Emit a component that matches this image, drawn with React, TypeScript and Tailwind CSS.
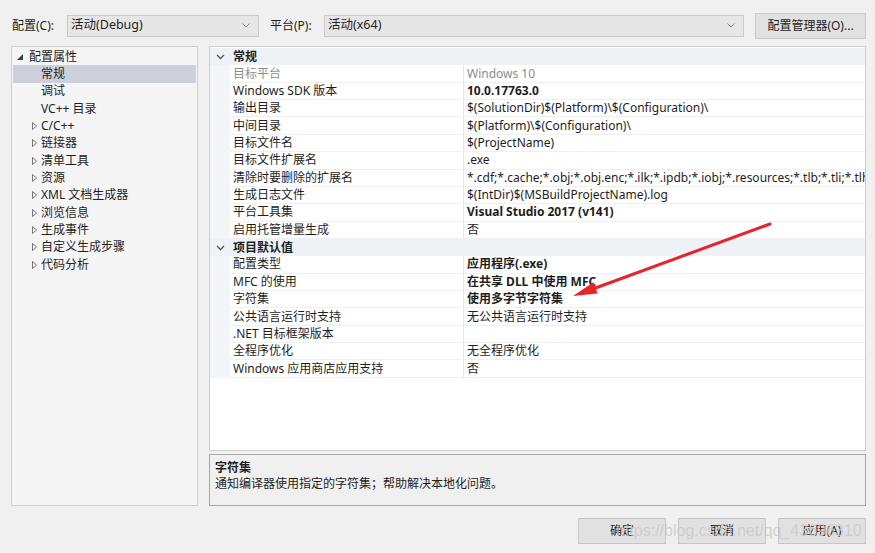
import React from 'react';

type Row =
  | { kind: 'cat'; label: string }
  | { kind: 'prop'; name: string; value: string; bold?: boolean; dim?: boolean };

const rows: Row[] = [
  { kind: 'cat', label: '常规' },
  { kind: 'prop', name: '目标平台', value: 'Windows 10', dim: true },
  { kind: 'prop', name: 'Windows SDK 版本', value: '10.0.17763.0', bold: true },
  { kind: 'prop', name: '输出目录', value: '$(SolutionDir)$(Platform)\\$(Configuration)\\' },
  { kind: 'prop', name: '中间目录', value: '$(Platform)\\$(Configuration)\\' },
  { kind: 'prop', name: '目标文件名', value: '$(ProjectName)' },
  { kind: 'prop', name: '目标文件扩展名', value: '.exe' },
  {
    kind: 'prop',
    name: '清除时要删除的扩展名',
    value: '*.cdf;*.cache;*.obj;*.obj.enc;*.ilk;*.ipdb;*.iobj;*.resources;*.tlb;*.tli;*.tlh;*.tmp;*.rsp',
  },
  { kind: 'prop', name: '生成日志文件', value: '$(IntDir)$(MSBuildProjectName).log' },
  { kind: 'prop', name: '平台工具集', value: 'Visual Studio 2017 (v141)', bold: true },
  { kind: 'prop', name: '启用托管增量生成', value: '否' },
  { kind: 'cat', label: '项目默认值' },
  { kind: 'prop', name: '配置类型', value: '应用程序(.exe)', bold: true },
  { kind: 'prop', name: 'MFC 的使用', value: '在共享 DLL 中使用 MFC', bold: true },
  { kind: 'prop', name: '字符集', value: '使用多字节字符集', bold: true },
  { kind: 'prop', name: '公共语言运行时支持', value: '无公共语言运行时支持' },
  { kind: 'prop', name: '.NET 目标框架版本', value: '' },
  { kind: 'prop', name: '全程序优化', value: '无全程序优化' },
  { kind: 'prop', name: 'Windows 应用商店应用支持', value: '否' },
];

const tree: { label: string; level: 0 | 1 | 2; selected?: boolean }[] = [
  { label: '配置属性', level: 0 },
  { label: '常规', level: 1, selected: true },
  { label: '调试', level: 1 },
  { label: 'VC++ 目录', level: 1 },
  { label: 'C/C++', level: 2 },
  { label: '链接器', level: 2 },
  { label: '清单工具', level: 2 },
  { label: '资源', level: 2 },
  { label: 'XML 文档生成器', level: 2 },
  { label: '浏览信息', level: 2 },
  { label: '生成事件', level: 2 },
  { label: '自定义生成步骤', level: 2 },
  { label: '代码分析', level: 2 },
];

function Chevron() {
  return (
    <svg width="9" height="6" viewBox="0 0 9 6" className="text-[#555]">
      <path d="M1 1l3.5 3.5L8 1" fill="none" stroke="currentColor" strokeWidth="1.3" />
    </svg>
  );
}

function Combo({ text, className }: { text: string; className: string }) {
  return (
    <div
      className={`h-[22px] bg-[#e6e6e6] border border-[#cacaca] flex items-center justify-between pl-[3px] pr-[8px] ${className}`}
    >
      <span className="text-[12.5px]">{text}</span>
      <svg width="8" height="5" viewBox="0 0 8 5">
        <path d="M0.5 0.5l3.5 3.5 3.5-3.5" fill="none" stroke="#8a8a8a" strokeWidth="1" />
      </svg>
    </div>
  );
}

function Btn({ label }: { label: string }) {
  return (
    <div className="w-[88px] h-[26px] bg-[#e1e1e1] border border-[#c6c6c6] flex items-center justify-center">
      {label}
    </div>
  );
}

export default function App() {
  return (
    <div className="w-[875px] h-[553px] bg-[#f0f0f0] text-[12px] leading-none text-[#1e1e1e] font-['Noto_Sans','Noto_Sans_CJK_SC',sans-serif] relative overflow-hidden">
      {/* toolbar */}
      <div className="flex items-center pt-[14px] pl-[12px] h-[37px]">
        <span className="w-[55px]">配置(C):</span>
        <Combo text="活动(Debug)" className="w-[192px]" />
        <span className="ml-[11px] w-[54px]">平台(P):</span>
        <Combo text="活动(x64)" className="w-[420px]" />
        <div className="ml-[11px] w-[111px] h-[26px] bg-[#e1e1e1] border border-[#cccccc] flex items-center justify-center">
          配置管理器(O)...
        </div>
      </div>

      <div className="flex pl-[11px] mt-[9px] gap-[11px]">
        {/* tree */}
        <div className="w-[187px] h-[460px] bg-[#f5f5f5] border border-[#cfcfcf] pt-[1px] px-[1px]">
          {tree.map((t) => (
            <div
              key={t.label}
              className={`h-[17.35px] flex items-center ${t.selected ? 'bg-[#cdd0dc]' : ''}`}
            >
              {t.level === 0 && (
                <>
                  <svg width="6" height="6" viewBox="0 0 6 6" className="ml-[4px] mr-[6px]">
                    <path d="M6 0V6H0z" fill="#3c3c3c" />
                  </svg>
                  <span>{t.label}</span>
                </>
              )}
              {t.level === 1 && <span className="ml-[28px]">{t.label}</span>}
              {t.level === 2 && (
                <>
                  <svg width="5" height="8" viewBox="0 0 5 8" className="ml-[19px] mr-[4px]">
                    <path d="M0.5 0.5V7.5L4.5 4z" fill="none" stroke="#6a6a6a" strokeWidth="0.9" />
                  </svg>
                  <span>{t.label}</span>
                </>
              )}
            </div>
          ))}
        </div>

        {/* right column */}
        <div className="w-[657px] flex flex-col gap-[3px]">
          <div className="h-[405px] bg-white border border-[#cfcfcf] pt-[1px] overflow-hidden">
            {rows.map((r, i) =>
              r.kind === 'cat' ? (
                <div key={i} className="h-[17.37px] flex items-center bg-[#eef2f7]">
                  <div className="w-[20px] shrink-0 flex justify-center">
                    <Chevron />
                  </div>
                  <span className="pl-[3px] font-bold">{r.label}</span>
                </div>
              ) : (
                <div key={i} className="h-[17.37px] flex">
                  <div className="w-[20px] shrink-0 bg-[#f3f6f9]" />
                  <div className="w-[234px] shrink-0 pl-[3px] flex items-center border-b border-[#f0f0f0] border-r border-r-[#e6e6e6]">
                    <span className={r.dim ? 'text-[#8c8c8c]' : ''}>{r.name}</span>
                  </div>
                  <div className="flex-1 min-w-0 overflow-hidden pl-[3px] flex items-center border-b border-[#f0f0f0] whitespace-nowrap">
                    <span
                      className={`${r.bold ? 'font-bold' : ''} ${r.dim ? 'text-[#8c8c8c]' : ''}`}
                    >
                      {r.value}
                    </span>
                  </div>
                </div>
              )
            )}
          </div>

          <div className="h-[52px] border border-[#a8a8a8] bg-[#f0f0f0] px-[5px] pt-[7px] flex flex-col gap-[4px]">
            <span className="font-bold">字符集</span>
            <span>通知编译器使用指定的字符集；帮助解决本地化问题。</span>
          </div>
        </div>
      </div>

      {/* buttons */}
      <div className="flex justify-end gap-[12px] pr-[9px] mt-[12px]">
        <Btn label="确定" />
        <Btn label="取消" />
        <Btn label="应用(A)" />
      </div>

      {/* watermark */}
      <div className="absolute left-[616px] top-[523px] text-[16px] leading-none text-[#c8c8c8]/80 font-['Liberation_Sans',sans-serif] whitespace-nowrap pointer-events-none">
        https://blog.csdn.net/qq_43696310
      </div>

      {/* annotation arrow */}
      <svg className="absolute left-0 top-0 pointer-events-none" width="875" height="553">
        <line x1="770" y1="224" x2="590" y2="290" stroke="#e8232a" strokeWidth="3" strokeLinecap="round" />
        <polygon points="573,296 597.6,293.4 593.4,282.2" fill="#e8232a" />
      </svg>
    </div>
  );
}
